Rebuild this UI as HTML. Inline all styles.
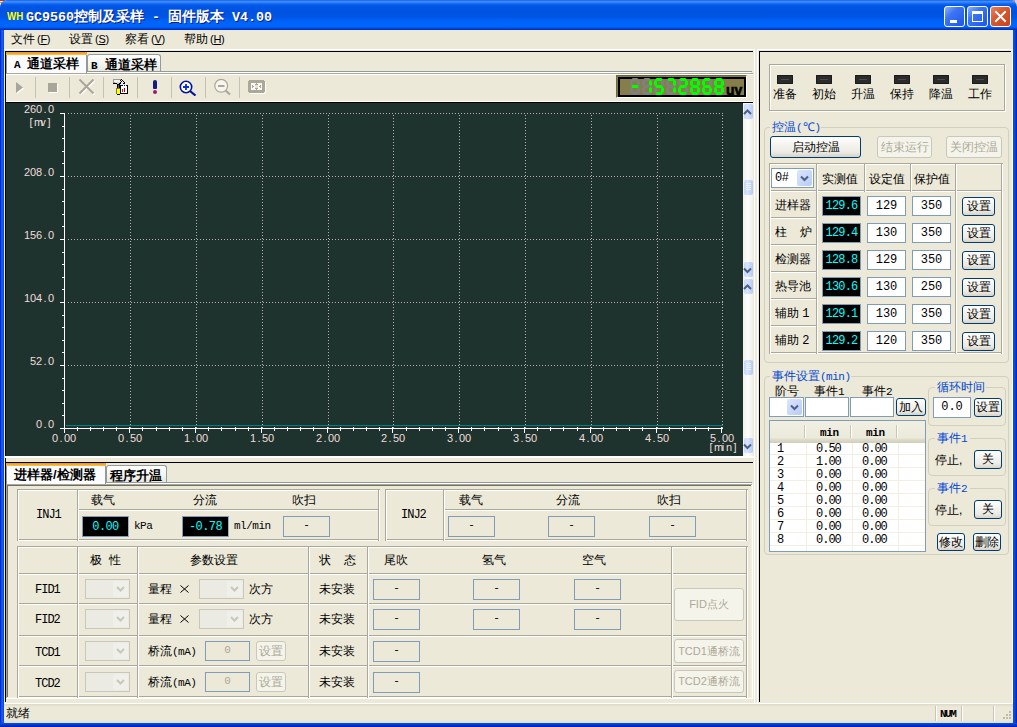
<!DOCTYPE html><html><head><meta charset="utf-8"><style>
*{margin:0;padding:0;box-sizing:border-box}
html,body{width:1017px;height:727px;overflow:hidden;background:#ECE9D8;position:relative;
 font-family:"Liberation Sans",sans-serif;font-size:12px;color:#000}
div{position:absolute}
.t{white-space:nowrap;line-height:12px}
.m{font-family:"Liberation Mono",monospace}
</style></head><body><div style="left:0;top:0;width:5px;height:1px;background:#c03810"></div>
<div style="left:0;top:1px;width:3px;height:1px;background:#f4f4f4"></div>
<div style="left:0;top:2px;width:2px;height:1px;background:#f08a30"></div>
<div style="left:0;top:3px;width:1px;height:2px;background:#fafafa"></div>
<div style="left:1011px;top:0;width:5px;height:2px;background:#c08890"></div>
<div style="left:1015px;top:0;width:2px;height:5px;background:#c8d0f4"></div>
<div style="left:0;top:0;width:1017px;height:30px;border-radius:7px 7px 0 0;background:linear-gradient(#0a50d8 0px,#3d8cff 1px,#3a8aff 2px,#0d63f2 4px,#0055e5 6px,#0053df 12px,#0055e4 17px,#0062f8 21px,#0066ff 26px,#0058ea 28px,#0032c8 29px,#0032c8 30px)"></div>
<div style="left:0;top:30px;width:4px;height:697px;background:linear-gradient(90deg,#0018c8,#0a3ee0 1px,#1a6af0 2px,#0a55e6 3px,#0842d8 4px)"></div>
<div style="left:1013px;top:30px;width:4px;height:697px;background:linear-gradient(90deg,#0842d8,#0a50e0 1px,#0038d0 3px,#0018b0 4px)"></div>
<div style="left:0;top:723px;width:1017px;height:4px;background:linear-gradient(#0a50e0,#0038d0 2px,#001ab0 4px)"></div>
<div class="t" style="left:7px;top:10px;font-weight:bold;font-size:11px;line-height:12px;color:#ffff00;transform:scaleX(0.88);transform-origin:0 0">WH</div>
<div class="t" style="left:26px;top:9px;font-weight:bold;font-size:14px;line-height:14px;color:#fff;text-shadow:1px 1px 0 #0a1f80"><span class="m" style="font-size:13.34px">GC9560</span>控制及采样<span class="m" style="font-size:13.34px"> - </span>固件版本<span class="m" style="font-size:13.34px"> V4.00</span></div>
<div style="left:944px;top:6px;width:21px;height:21px;border:1px solid #fff;border-radius:3px;background:linear-gradient(135deg,#8fb2ff 0%,#3d75f5 35%,#1d55e8 100%)"><div style="left:5px;top:13px;width:7px;height:3px;background:#fff"></div></div>
<div style="left:967px;top:6px;width:21px;height:21px;border:1px solid #fff;border-radius:3px;background:linear-gradient(135deg,#8fb2ff 0%,#3d75f5 35%,#1d55e8 100%)"><div style="left:4px;top:4px;width:11px;height:11px;border:1px solid #fff;border-top-width:3px"></div></div>
<div style="left:990px;top:6px;width:21px;height:21px;border:1px solid #fff;border-radius:3px;background:linear-gradient(135deg,#e8815f 0%,#d85a30 40%,#c8421a 100%)"><svg style="position:absolute;left:0;top:0" width="19" height="19" viewBox="0 0 19 19"><path d="M5 5 L14 14 M14 5 L5 14" stroke="#fff" stroke-width="2" stroke-linecap="square"/></svg></div>
<div class="t" style="left:11px;top:33px;font-size:12px;line-height:12px">文件<span style="margin-left:2px;font-size:11px;letter-spacing:-0.3px">(<u>F</u>)</span></div>
<div class="t" style="left:69px;top:33px;font-size:12px;line-height:12px">设置<span style="margin-left:2px;font-size:11px;letter-spacing:-0.3px">(<u>S</u>)</span></div>
<div class="t" style="left:125px;top:33px;font-size:12px;line-height:12px">察看<span style="margin-left:2px;font-size:11px;letter-spacing:-0.3px">(<u>V</u>)</span></div>
<div class="t" style="left:184px;top:33px;font-size:12px;line-height:12px">帮助<span style="margin-left:2px;font-size:11px;letter-spacing:-0.3px">(<u>H</u>)</span></div>
<div style="left:4px;top:49px;width:751px;height:1px;background:#fff"></div>
<div style="left:754px;top:49px;width:1px;height:654px;background:#fff"></div>
<div style="left:5px;top:51px;width:748px;height:1px;background:#000"></div>
<div style="left:5px;top:51px;width:1px;height:651px;background:#000"></div>
<div style="left:87px;top:71px;width:665px;height:1px;background:#919b9c"></div>
<div style="left:87px;top:72px;width:664px;height:1px;background:#fff"></div>
<div style="left:6px;top:73px;width:747px;height:1px;background:#aca899"></div>
<div style="left:6px;top:74px;width:747px;height:1px;background:#fff"></div>
<div style="left:87px;top:54px;width:74px;height:17px;border:1px solid #919b9c;border-bottom:none;border-radius:3px 3px 0 0;background:linear-gradient(#fff,#f3f3ef 60%,#e8e8e0)"></div>
<div style="left:6px;top:52px;width:81px;height:21px;background:#fcfcfe;border-left:1px solid #919b9c;border-right:1px solid #919b9c"></div>
<div style="left:6px;top:52px;width:81px;height:3px;background:linear-gradient(#e68b2c,#ffc73c);border-radius:2px 2px 0 0"></div>
<div class="t" style="left:14px;top:57px;font-weight:bold;font-size:13px;line-height:13px"><span class="m" style="font-size:11px;display:inline-block;width:13px">A</span>通道采样</div>
<div class="t" style="left:91px;top:58px;font-weight:bold;font-size:13px;line-height:13px"><span class="m" style="font-size:11px;display:inline-block;width:14px">B</span>通道采样</div>
<div style="left:35px;top:77px;width:1px;height:21px;background:#c5c2b2"></div>
<div style="left:69px;top:77px;width:1px;height:21px;background:#c5c2b2"></div>
<div style="left:103px;top:77px;width:1px;height:21px;background:#c5c2b2"></div>
<div style="left:137px;top:77px;width:1px;height:21px;background:#c5c2b2"></div>
<div style="left:171px;top:77px;width:1px;height:21px;background:#c5c2b2"></div>
<div style="left:205px;top:77px;width:1px;height:21px;background:#c5c2b2"></div>
<div style="left:239px;top:77px;width:1px;height:21px;background:#c5c2b2"></div>
<svg style="position:absolute;left:15px;top:82px" width="10" height="13"><path d="M2 1 L9 6.5 L2 12 Z" fill="#fff"/><path d="M1 0 L8 5.5 L1 11 Z" fill="#a8a599"/></svg>
<div style="left:49px;top:84px;width:9px;height:9px;background:#fff"></div>
<div style="left:48px;top:83px;width:9px;height:9px;background:#a8a599"></div>
<svg style="position:absolute;left:78px;top:78px" width="18" height="18"><path d="M2.5 2.5 L16.5 16.5 M16.5 2.5 L2.5 16.5" stroke="#fff" stroke-width="2"/><path d="M1.5 1.5 L15.5 15.5 M15.5 1.5 L1.5 15.5" stroke="#a8a599" stroke-width="2"/></svg>
<svg style="position:absolute;left:108px;top:76px" width="24" height="22" shape-rendering="crispEdges"><rect x="5" y="3" width="8" height="1" fill="#9a9a9a"/><rect x="13" y="3" width="1" height="1" fill="#000"/><rect x="5" y="4" width="1" height="3" fill="#9a9a9a"/><rect x="6" y="4" width="6" height="2" fill="#f4f4f4"/><rect x="12" y="4" width="1" height="1" fill="#000"/><rect x="14" y="4" width="1" height="1" fill="#000"/><rect x="13" y="5" width="1" height="1" fill="#000"/><rect x="15" y="5" width="1" height="1" fill="#000"/><rect x="6" y="6" width="1" height="1" fill="#9a9a9a"/><rect x="9" y="6" width="3" height="1" fill="#d8d8d8"/><rect x="12" y="6" width="1" height="1" fill="#000"/><rect x="16" y="6" width="1" height="1" fill="#000"/><rect x="5" y="7" width="4" height="1" fill="#000"/><rect x="9" y="7" width="2" height="1" fill="#c8c8c8"/><rect x="11" y="7" width="2" height="1" fill="#000"/><rect x="15" y="7" width="2" height="1" fill="#000"/><rect x="9" y="8" width="3" height="1" fill="#000"/><rect x="9" y="9" width="1" height="3" fill="#000"/><rect x="11" y="9" width="1" height="3" fill="#000"/><rect x="10" y="9" width="1" height="3" fill="#606060"/><rect x="8" y="12" width="4" height="1" fill="#808000"/><rect x="8" y="13" width="1" height="5" fill="#808000"/><rect x="9" y="13" width="3" height="5" fill="#ffff00"/><rect x="9" y="13" width="1" height="1" fill="#ffffc0"/><rect x="9" y="18" width="3" height="1" fill="#000"/><rect x="12" y="9" width="7" height="1" fill="#000080"/><rect x="15" y="9" width="1" height="1" fill="#fffff0"/><rect x="17" y="9" width="1" height="1" fill="#fffff0"/><rect x="12" y="10" width="7" height="7" fill="#fffff0"/><rect x="19" y="9" width="1" height="9" fill="#000"/><rect x="12" y="17" width="8" height="1" fill="#000"/><rect x="12" y="10" width="1" height="7" fill="#000"/><rect x="14" y="13" width="1" height="3" fill="#ff0000"/><rect x="16" y="12" width="1" height="4" fill="#800080"/></svg>
<div style="left:153px;top:80px;width:4px;height:9px;background:#1a1a80;border-radius:2px 2px 1px 1px"></div>
<div style="left:153px;top:90px;width:4px;height:4px;background:#902070;border-radius:2px"></div>
<svg style="position:absolute;left:179px;top:80px" width="18" height="16"><circle cx="7" cy="7" r="5.7" fill="#fff" stroke="#0010a0" stroke-width="1.6"/><path d="M4 7 H10 M7 4 V10" stroke="#0030e0" stroke-width="1.8"/><path d="M11 11 L16.5 15.5" stroke="#0010a0" stroke-width="2.2"/></svg>
<svg style="position:absolute;left:212px;top:78px" width="20" height="19"><circle cx="9.2" cy="7.8" r="6.4" fill="#f6f5ee" stroke="#aca899" stroke-width="1.2"/><path d="M6 8 H12.5" stroke="#aca899" stroke-width="2"/><path d="M13.5 12.5 L18 16.5" stroke="#aca899" stroke-width="2.2"/></svg>
<svg style="position:absolute;left:248px;top:80px" width="18" height="14" shape-rendering="crispEdges"><rect x="1" y="0" width="15" height="13" fill="#aca899"/><rect x="0" y="1" width="17" height="11" fill="#aca899"/><rect x="2" y="13" width="15" height="1" fill="#fff"/><rect x="17" y="2" width="1" height="11" fill="#fff"/><rect x="3" y="3" width="11" height="7" fill="#fbfbf6"/><rect x="4" y="5" width="1" height="3" fill="#aca899"/><rect x="5" y="6" width="1" height="1" fill="#aca899"/><rect x="12" y="5" width="1" height="3" fill="#aca899"/><rect x="11" y="6" width="1" height="1" fill="#aca899"/><rect x="8" y="3" width="1" height="7" fill="#aca899"/><rect x="7" y="4" width="3" height="1" fill="#aca899"/><rect x="7" y="8" width="3" height="1" fill="#aca899"/><rect x="7" y="5" width="3" height="3" fill="#e6e4d6"/></svg>
<div style="left:616px;top:75px;width:131px;height:23px;background:#847c4b;border-top:1px solid #6d683c;border-left:1px solid #6d683c;border-right:1px solid #ffffff;border-bottom:1px solid #ffffff"></div>
<div style="left:618px;top:77px;width:128px;height:20px;border:2px solid #000;background:#857d4a"></div>
<svg style="position:absolute;left:630px;top:78px" width="96" height="17"><polygon points="2.6,0 7.4,0 8.8,1.5 7.4,3 2.6,3 1.2,1.5" fill="#808080"/><polygon points="8.5,1.8 10.0,3.2 10.0,6.8 8.5,8.2 7.0,6.8 7.0,3.2" fill="#808080"/><polygon points="8.5,8.8 10.0,10.2 10.0,13.8 8.5,15.2 7.0,13.8 7.0,10.2" fill="#808080"/><polygon points="2.6,14 7.4,14 8.8,15.5 7.4,17 2.6,17 1.2,15.5" fill="#808080"/><polygon points="1.5,8.8 3.0,10.2 3.0,13.8 1.5,15.2 0.0,13.8 0.0,10.2" fill="#808080"/><polygon points="1.5,1.8 3.0,3.2 3.0,6.8 1.5,8.2 0.0,6.8 0.0,3.2" fill="#808080"/><polygon points="2.6,7 7.4,7 8.8,8.5 7.4,10 2.6,10 1.2,8.5" fill="#00ff00"/><polygon points="14.6,0 19.4,0 20.8,1.5 19.4,3 14.6,3 13.2,1.5" fill="#808080"/><polygon points="20.5,1.8 22.0,3.2 22.0,6.8 20.5,8.2 19.0,6.8 19.0,3.2" fill="#00ff00"/><polygon points="20.5,8.8 22.0,10.2 22.0,13.8 20.5,15.2 19.0,13.8 19.0,10.2" fill="#00ff00"/><polygon points="14.6,14 19.4,14 20.8,15.5 19.4,17 14.6,17 13.2,15.5" fill="#808080"/><polygon points="13.5,8.8 15.0,10.2 15.0,13.8 13.5,15.2 12.0,13.8 12.0,10.2" fill="#808080"/><polygon points="13.5,1.8 15.0,3.2 15.0,6.8 13.5,8.2 12.0,6.8 12.0,3.2" fill="#808080"/><polygon points="14.6,7 19.4,7 20.8,8.5 19.4,10 14.6,10 13.2,8.5" fill="#808080"/><polygon points="26.6,0 31.4,0 32.8,1.5 31.4,3 26.6,3 25.2,1.5" fill="#00ff00"/><polygon points="32.5,1.8 34.0,3.2 34.0,6.8 32.5,8.2 31.0,6.8 31.0,3.2" fill="#808080"/><polygon points="32.5,8.8 34.0,10.2 34.0,13.8 32.5,15.2 31.0,13.8 31.0,10.2" fill="#00ff00"/><polygon points="26.6,14 31.4,14 32.8,15.5 31.4,17 26.6,17 25.2,15.5" fill="#00ff00"/><polygon points="25.5,8.8 27.0,10.2 27.0,13.8 25.5,15.2 24.0,13.8 24.0,10.2" fill="#808080"/><polygon points="25.5,1.8 27.0,3.2 27.0,6.8 25.5,8.2 24.0,6.8 24.0,3.2" fill="#00ff00"/><polygon points="26.6,7 31.4,7 32.8,8.5 31.4,10 26.6,10 25.2,8.5" fill="#00ff00"/><polygon points="38.6,0 43.4,0 44.8,1.5 43.4,3 38.6,3 37.2,1.5" fill="#00ff00"/><polygon points="44.5,1.8 46.0,3.2 46.0,6.8 44.5,8.2 43.0,6.8 43.0,3.2" fill="#00ff00"/><polygon points="44.5,8.8 46.0,10.2 46.0,13.8 44.5,15.2 43.0,13.8 43.0,10.2" fill="#00ff00"/><polygon points="38.6,14 43.4,14 44.8,15.5 43.4,17 38.6,17 37.2,15.5" fill="#808080"/><polygon points="37.5,8.8 39.0,10.2 39.0,13.8 37.5,15.2 36.0,13.8 36.0,10.2" fill="#808080"/><polygon points="37.5,1.8 39.0,3.2 39.0,6.8 37.5,8.2 36.0,6.8 36.0,3.2" fill="#808080"/><polygon points="38.6,7 43.4,7 44.8,8.5 43.4,10 38.6,10 37.2,8.5" fill="#808080"/><polygon points="50.6,0 55.4,0 56.8,1.5 55.4,3 50.6,3 49.2,1.5" fill="#00ff00"/><polygon points="56.5,1.8 58.0,3.2 58.0,6.8 56.5,8.2 55.0,6.8 55.0,3.2" fill="#00ff00"/><polygon points="56.5,8.8 58.0,10.2 58.0,13.8 56.5,15.2 55.0,13.8 55.0,10.2" fill="#808080"/><polygon points="50.6,14 55.4,14 56.8,15.5 55.4,17 50.6,17 49.2,15.5" fill="#00ff00"/><polygon points="49.5,8.8 51.0,10.2 51.0,13.8 49.5,15.2 48.0,13.8 48.0,10.2" fill="#00ff00"/><polygon points="49.5,1.8 51.0,3.2 51.0,6.8 49.5,8.2 48.0,6.8 48.0,3.2" fill="#808080"/><polygon points="50.6,7 55.4,7 56.8,8.5 55.4,10 50.6,10 49.2,8.5" fill="#00ff00"/><polygon points="62.6,0 67.4,0 68.8,1.5 67.4,3 62.6,3 61.2,1.5" fill="#00ff00"/><polygon points="68.5,1.8 70.0,3.2 70.0,6.8 68.5,8.2 67.0,6.8 67.0,3.2" fill="#00ff00"/><polygon points="68.5,8.8 70.0,10.2 70.0,13.8 68.5,15.2 67.0,13.8 67.0,10.2" fill="#00ff00"/><polygon points="62.6,14 67.4,14 68.8,15.5 67.4,17 62.6,17 61.2,15.5" fill="#00ff00"/><polygon points="61.5,8.8 63.0,10.2 63.0,13.8 61.5,15.2 60.0,13.8 60.0,10.2" fill="#00ff00"/><polygon points="61.5,1.8 63.0,3.2 63.0,6.8 61.5,8.2 60.0,6.8 60.0,3.2" fill="#00ff00"/><polygon points="62.6,7 67.4,7 68.8,8.5 67.4,10 62.6,10 61.2,8.5" fill="#00ff00"/><polygon points="74.6,0 79.4,0 80.8,1.5 79.4,3 74.6,3 73.2,1.5" fill="#00ff00"/><polygon points="80.5,1.8 82.0,3.2 82.0,6.8 80.5,8.2 79.0,6.8 79.0,3.2" fill="#808080"/><polygon points="80.5,8.8 82.0,10.2 82.0,13.8 80.5,15.2 79.0,13.8 79.0,10.2" fill="#00ff00"/><polygon points="74.6,14 79.4,14 80.8,15.5 79.4,17 74.6,17 73.2,15.5" fill="#00ff00"/><polygon points="73.5,8.8 75.0,10.2 75.0,13.8 73.5,15.2 72.0,13.8 72.0,10.2" fill="#00ff00"/><polygon points="73.5,1.8 75.0,3.2 75.0,6.8 73.5,8.2 72.0,6.8 72.0,3.2" fill="#00ff00"/><polygon points="74.6,7 79.4,7 80.8,8.5 79.4,10 74.6,10 73.2,8.5" fill="#00ff00"/><polygon points="86.6,0 91.4,0 92.8,1.5 91.4,3 86.6,3 85.2,1.5" fill="#00ff00"/><polygon points="92.5,1.8 94.0,3.2 94.0,6.8 92.5,8.2 91.0,6.8 91.0,3.2" fill="#00ff00"/><polygon points="92.5,8.8 94.0,10.2 94.0,13.8 92.5,15.2 91.0,13.8 91.0,10.2" fill="#00ff00"/><polygon points="86.6,14 91.4,14 92.8,15.5 91.4,17 86.6,17 85.2,15.5" fill="#00ff00"/><polygon points="85.5,8.8 87.0,10.2 87.0,13.8 85.5,15.2 84.0,13.8 84.0,10.2" fill="#00ff00"/><polygon points="85.5,1.8 87.0,3.2 87.0,6.8 85.5,8.2 84.0,6.8 84.0,3.2" fill="#00ff00"/><polygon points="86.6,7 91.4,7 92.8,8.5 91.4,10 86.6,10 85.2,8.5" fill="#00ff00"/></svg>
<div class="t" style="left:726px;top:83px;font-weight:bold;font-size:14px;line-height:14px;letter-spacing:0px;-webkit-text-stroke:0.6px #000">uv</div>
<div style="left:6px;top:101px;width:747px;height:1px;background:#fff"></div>
<div style="left:5px;top:102px;width:748px;height:1px;background:#000"></div>
<div style="left:6px;top:103px;width:737px;height:353px;background:#1f332e"></div>
<div style="left:5px;top:456px;width:749px;height:2px;background:#fff"></div>
<div style="left:66px;top:113px;width:657px;height:1px;background:repeating-linear-gradient(90deg,#b4b4ac 0 1px,transparent 1px 3px);background-position:2px 0"></div>
<div style="left:66px;top:176px;width:657px;height:1px;background:repeating-linear-gradient(90deg,#b4b4ac 0 1px,transparent 1px 3px);background-position:2px 0"></div>
<div style="left:66px;top:239px;width:657px;height:1px;background:repeating-linear-gradient(90deg,#b4b4ac 0 1px,transparent 1px 3px);background-position:2px 0"></div>
<div style="left:66px;top:302px;width:657px;height:1px;background:repeating-linear-gradient(90deg,#b4b4ac 0 1px,transparent 1px 3px);background-position:2px 0"></div>
<div style="left:66px;top:365px;width:657px;height:1px;background:repeating-linear-gradient(90deg,#b4b4ac 0 1px,transparent 1px 3px);background-position:2px 0"></div>
<div style="left:130px;top:115px;width:1px;height:313px;background:repeating-linear-gradient(180deg,#b4b4ac 0 1px,transparent 1px 3px)"></div>
<div style="left:196px;top:115px;width:1px;height:313px;background:repeating-linear-gradient(180deg,#b4b4ac 0 1px,transparent 1px 3px)"></div>
<div style="left:262px;top:115px;width:1px;height:313px;background:repeating-linear-gradient(180deg,#b4b4ac 0 1px,transparent 1px 3px)"></div>
<div style="left:328px;top:115px;width:1px;height:313px;background:repeating-linear-gradient(180deg,#b4b4ac 0 1px,transparent 1px 3px)"></div>
<div style="left:393px;top:115px;width:1px;height:313px;background:repeating-linear-gradient(180deg,#b4b4ac 0 1px,transparent 1px 3px)"></div>
<div style="left:459px;top:115px;width:1px;height:313px;background:repeating-linear-gradient(180deg,#b4b4ac 0 1px,transparent 1px 3px)"></div>
<div style="left:525px;top:115px;width:1px;height:313px;background:repeating-linear-gradient(180deg,#b4b4ac 0 1px,transparent 1px 3px)"></div>
<div style="left:591px;top:115px;width:1px;height:313px;background:repeating-linear-gradient(180deg,#b4b4ac 0 1px,transparent 1px 3px)"></div>
<div style="left:657px;top:115px;width:1px;height:313px;background:repeating-linear-gradient(180deg,#b4b4ac 0 1px,transparent 1px 3px)"></div>
<div style="left:722px;top:115px;width:1px;height:313px;background:repeating-linear-gradient(180deg,#b4b4ac 0 1px,transparent 1px 3px)"></div>
<div style="left:64px;top:113px;width:1px;height:320px;background:#fff"></div>
<div style="left:60px;top:113px;width:5px;height:1px;background:#fff"></div>
<div style="left:62px;top:126px;width:3px;height:1px;background:#fff"></div>
<div style="left:62px;top:138px;width:3px;height:1px;background:#fff"></div>
<div style="left:62px;top:151px;width:3px;height:1px;background:#fff"></div>
<div style="left:62px;top:163px;width:3px;height:1px;background:#fff"></div>
<div style="left:60px;top:176px;width:5px;height:1px;background:#fff"></div>
<div style="left:62px;top:189px;width:3px;height:1px;background:#fff"></div>
<div style="left:62px;top:201px;width:3px;height:1px;background:#fff"></div>
<div style="left:62px;top:214px;width:3px;height:1px;background:#fff"></div>
<div style="left:62px;top:226px;width:3px;height:1px;background:#fff"></div>
<div style="left:60px;top:239px;width:5px;height:1px;background:#fff"></div>
<div style="left:62px;top:252px;width:3px;height:1px;background:#fff"></div>
<div style="left:62px;top:264px;width:3px;height:1px;background:#fff"></div>
<div style="left:62px;top:277px;width:3px;height:1px;background:#fff"></div>
<div style="left:62px;top:289px;width:3px;height:1px;background:#fff"></div>
<div style="left:60px;top:302px;width:5px;height:1px;background:#fff"></div>
<div style="left:62px;top:315px;width:3px;height:1px;background:#fff"></div>
<div style="left:62px;top:327px;width:3px;height:1px;background:#fff"></div>
<div style="left:62px;top:340px;width:3px;height:1px;background:#fff"></div>
<div style="left:62px;top:352px;width:3px;height:1px;background:#fff"></div>
<div style="left:60px;top:365px;width:5px;height:1px;background:#fff"></div>
<div style="left:62px;top:378px;width:3px;height:1px;background:#fff"></div>
<div style="left:62px;top:390px;width:3px;height:1px;background:#fff"></div>
<div style="left:62px;top:403px;width:3px;height:1px;background:#fff"></div>
<div style="left:62px;top:415px;width:3px;height:1px;background:#fff"></div>
<div style="left:60px;top:428px;width:5px;height:1px;background:#fff"></div>
<div style="left:64px;top:428px;width:659px;height:1px;background:#fff"></div>
<div style="left:77px;top:427px;width:1px;height:4px;background:#fff"></div>
<div style="left:90px;top:427px;width:1px;height:4px;background:#fff"></div>
<div style="left:103px;top:427px;width:1px;height:4px;background:#fff"></div>
<div style="left:116px;top:427px;width:1px;height:4px;background:#fff"></div>
<div style="left:129px;top:427px;width:1px;height:6px;background:#fff"></div>
<div style="left:142px;top:427px;width:1px;height:4px;background:#fff"></div>
<div style="left:156px;top:427px;width:1px;height:4px;background:#fff"></div>
<div style="left:169px;top:427px;width:1px;height:4px;background:#fff"></div>
<div style="left:182px;top:427px;width:1px;height:4px;background:#fff"></div>
<div style="left:195px;top:427px;width:1px;height:6px;background:#fff"></div>
<div style="left:208px;top:427px;width:1px;height:4px;background:#fff"></div>
<div style="left:221px;top:427px;width:1px;height:4px;background:#fff"></div>
<div style="left:235px;top:427px;width:1px;height:4px;background:#fff"></div>
<div style="left:248px;top:427px;width:1px;height:4px;background:#fff"></div>
<div style="left:261px;top:427px;width:1px;height:6px;background:#fff"></div>
<div style="left:274px;top:427px;width:1px;height:4px;background:#fff"></div>
<div style="left:287px;top:427px;width:1px;height:4px;background:#fff"></div>
<div style="left:300px;top:427px;width:1px;height:4px;background:#fff"></div>
<div style="left:313px;top:427px;width:1px;height:4px;background:#fff"></div>
<div style="left:327px;top:427px;width:1px;height:6px;background:#fff"></div>
<div style="left:340px;top:427px;width:1px;height:4px;background:#fff"></div>
<div style="left:353px;top:427px;width:1px;height:4px;background:#fff"></div>
<div style="left:366px;top:427px;width:1px;height:4px;background:#fff"></div>
<div style="left:379px;top:427px;width:1px;height:4px;background:#fff"></div>
<div style="left:392px;top:427px;width:1px;height:6px;background:#fff"></div>
<div style="left:406px;top:427px;width:1px;height:4px;background:#fff"></div>
<div style="left:419px;top:427px;width:1px;height:4px;background:#fff"></div>
<div style="left:432px;top:427px;width:1px;height:4px;background:#fff"></div>
<div style="left:445px;top:427px;width:1px;height:4px;background:#fff"></div>
<div style="left:458px;top:427px;width:1px;height:6px;background:#fff"></div>
<div style="left:471px;top:427px;width:1px;height:4px;background:#fff"></div>
<div style="left:484px;top:427px;width:1px;height:4px;background:#fff"></div>
<div style="left:498px;top:427px;width:1px;height:4px;background:#fff"></div>
<div style="left:511px;top:427px;width:1px;height:4px;background:#fff"></div>
<div style="left:524px;top:427px;width:1px;height:6px;background:#fff"></div>
<div style="left:537px;top:427px;width:1px;height:4px;background:#fff"></div>
<div style="left:550px;top:427px;width:1px;height:4px;background:#fff"></div>
<div style="left:563px;top:427px;width:1px;height:4px;background:#fff"></div>
<div style="left:577px;top:427px;width:1px;height:4px;background:#fff"></div>
<div style="left:590px;top:427px;width:1px;height:6px;background:#fff"></div>
<div style="left:603px;top:427px;width:1px;height:4px;background:#fff"></div>
<div style="left:616px;top:427px;width:1px;height:4px;background:#fff"></div>
<div style="left:629px;top:427px;width:1px;height:4px;background:#fff"></div>
<div style="left:642px;top:427px;width:1px;height:4px;background:#fff"></div>
<div style="left:656px;top:427px;width:1px;height:6px;background:#fff"></div>
<div style="left:669px;top:427px;width:1px;height:4px;background:#fff"></div>
<div style="left:682px;top:427px;width:1px;height:4px;background:#fff"></div>
<div style="left:695px;top:427px;width:1px;height:4px;background:#fff"></div>
<div style="left:708px;top:427px;width:1px;height:4px;background:#fff"></div>
<div style="left:721px;top:427px;width:1px;height:6px;background:#fff"></div>
<div style="left:66px;top:425px;width:657px;height:1px;background:#008080"></div>
<div class="t" style="left:24px;top:103px;width:30px;font-size:11px;line-height:12px;color:#f0dcdc"><span style="display:inline-block;width:6px;text-align:center">2</span><span style="display:inline-block;width:6px;text-align:center">6</span><span style="display:inline-block;width:6px;text-align:center">0</span><span style="display:inline-block;width:6px;text-align:center">.</span><span style="display:inline-block;width:6px;text-align:center">0</span></div>
<div class="t" style="left:24px;top:166px;width:30px;font-size:11px;line-height:12px;color:#f0dcdc"><span style="display:inline-block;width:6px;text-align:center">2</span><span style="display:inline-block;width:6px;text-align:center">0</span><span style="display:inline-block;width:6px;text-align:center">8</span><span style="display:inline-block;width:6px;text-align:center">.</span><span style="display:inline-block;width:6px;text-align:center">0</span></div>
<div class="t" style="left:24px;top:229px;width:30px;font-size:11px;line-height:12px;color:#f0dcdc"><span style="display:inline-block;width:6px;text-align:center">1</span><span style="display:inline-block;width:6px;text-align:center">5</span><span style="display:inline-block;width:6px;text-align:center">6</span><span style="display:inline-block;width:6px;text-align:center">.</span><span style="display:inline-block;width:6px;text-align:center">0</span></div>
<div class="t" style="left:24px;top:292px;width:30px;font-size:11px;line-height:12px;color:#f0dcdc"><span style="display:inline-block;width:6px;text-align:center">1</span><span style="display:inline-block;width:6px;text-align:center">0</span><span style="display:inline-block;width:6px;text-align:center">4</span><span style="display:inline-block;width:6px;text-align:center">.</span><span style="display:inline-block;width:6px;text-align:center">0</span></div>
<div class="t" style="left:30px;top:355px;width:24px;font-size:11px;line-height:12px;color:#f0dcdc"><span style="display:inline-block;width:6px;text-align:center">5</span><span style="display:inline-block;width:6px;text-align:center">2</span><span style="display:inline-block;width:6px;text-align:center">.</span><span style="display:inline-block;width:6px;text-align:center">0</span></div>
<div class="t" style="left:36px;top:418px;width:18px;font-size:11px;line-height:12px;color:#f0dcdc"><span style="display:inline-block;width:6px;text-align:center">0</span><span style="display:inline-block;width:6px;text-align:center">.</span><span style="display:inline-block;width:6px;text-align:center">0</span></div>
<div class="t" style="left:28px;top:116px;font-size:11px;line-height:12px;color:#f0dcdc"><span style="display:inline-block;width:6px;text-align:center">[</span><span style="display:inline-block;width:6px;text-align:center">m</span><span style="display:inline-block;width:6px;text-align:center">v</span><span style="display:inline-block;width:6px;text-align:center">]</span></div>
<div class="t" style="left:52px;top:432px;font-size:11px;line-height:12px;color:#f0dcdc"><span style="display:inline-block;width:6px;text-align:center">0</span><span style="display:inline-block;width:6px;text-align:center">.</span><span style="display:inline-block;width:6px;text-align:center">0</span><span style="display:inline-block;width:6px;text-align:center">0</span></div>
<div class="t" style="left:118px;top:432px;font-size:11px;line-height:12px;color:#f0dcdc"><span style="display:inline-block;width:6px;text-align:center">0</span><span style="display:inline-block;width:6px;text-align:center">.</span><span style="display:inline-block;width:6px;text-align:center">5</span><span style="display:inline-block;width:6px;text-align:center">0</span></div>
<div class="t" style="left:184px;top:432px;font-size:11px;line-height:12px;color:#f0dcdc"><span style="display:inline-block;width:6px;text-align:center">1</span><span style="display:inline-block;width:6px;text-align:center">.</span><span style="display:inline-block;width:6px;text-align:center">0</span><span style="display:inline-block;width:6px;text-align:center">0</span></div>
<div class="t" style="left:250px;top:432px;font-size:11px;line-height:12px;color:#f0dcdc"><span style="display:inline-block;width:6px;text-align:center">1</span><span style="display:inline-block;width:6px;text-align:center">.</span><span style="display:inline-block;width:6px;text-align:center">5</span><span style="display:inline-block;width:6px;text-align:center">0</span></div>
<div class="t" style="left:316px;top:432px;font-size:11px;line-height:12px;color:#f0dcdc"><span style="display:inline-block;width:6px;text-align:center">2</span><span style="display:inline-block;width:6px;text-align:center">.</span><span style="display:inline-block;width:6px;text-align:center">0</span><span style="display:inline-block;width:6px;text-align:center">0</span></div>
<div class="t" style="left:381px;top:432px;font-size:11px;line-height:12px;color:#f0dcdc"><span style="display:inline-block;width:6px;text-align:center">2</span><span style="display:inline-block;width:6px;text-align:center">.</span><span style="display:inline-block;width:6px;text-align:center">5</span><span style="display:inline-block;width:6px;text-align:center">0</span></div>
<div class="t" style="left:447px;top:432px;font-size:11px;line-height:12px;color:#f0dcdc"><span style="display:inline-block;width:6px;text-align:center">3</span><span style="display:inline-block;width:6px;text-align:center">.</span><span style="display:inline-block;width:6px;text-align:center">0</span><span style="display:inline-block;width:6px;text-align:center">0</span></div>
<div class="t" style="left:513px;top:432px;font-size:11px;line-height:12px;color:#f0dcdc"><span style="display:inline-block;width:6px;text-align:center">3</span><span style="display:inline-block;width:6px;text-align:center">.</span><span style="display:inline-block;width:6px;text-align:center">5</span><span style="display:inline-block;width:6px;text-align:center">0</span></div>
<div class="t" style="left:579px;top:432px;font-size:11px;line-height:12px;color:#f0dcdc"><span style="display:inline-block;width:6px;text-align:center">4</span><span style="display:inline-block;width:6px;text-align:center">.</span><span style="display:inline-block;width:6px;text-align:center">0</span><span style="display:inline-block;width:6px;text-align:center">0</span></div>
<div class="t" style="left:645px;top:432px;font-size:11px;line-height:12px;color:#f0dcdc"><span style="display:inline-block;width:6px;text-align:center">4</span><span style="display:inline-block;width:6px;text-align:center">.</span><span style="display:inline-block;width:6px;text-align:center">5</span><span style="display:inline-block;width:6px;text-align:center">0</span></div>
<div class="t" style="left:710px;top:432px;font-size:11px;line-height:12px;color:#f0dcdc"><span style="display:inline-block;width:6px;text-align:center">5</span><span style="display:inline-block;width:6px;text-align:center">.</span><span style="display:inline-block;width:6px;text-align:center">0</span><span style="display:inline-block;width:6px;text-align:center">0</span></div>
<div class="t" style="left:708px;top:441px;font-size:11px;line-height:12px;color:#f0dcdc"><span style="display:inline-block;width:6px;text-align:center">[</span><span style="display:inline-block;width:6px;text-align:center">m</span><span style="display:inline-block;width:6px;text-align:center">i</span><span style="display:inline-block;width:6px;text-align:center">n</span><span style="display:inline-block;width:6px;text-align:center">]</span></div>
<div style="left:743px;top:103px;width:10px;height:175px;background:linear-gradient(90deg,#f3f1ec,#fefefe 50%,#f0eee8)"></div>
<div style="left:744px;top:104px;width:9px;height:15px;border-radius:2px;background:linear-gradient(90deg,#c6d6fc,#d8e4fe 40%,#b4c8f6)"></div>
<svg style="position:absolute;left:743px;top:108px" width="10" height="9"><path d="M1 6 L4.5 2.5 L8 6" stroke="#4d6185" stroke-width="2" fill="none"/></svg>
<div style="left:744px;top:262px;width:9px;height:15px;border-radius:2px;background:linear-gradient(90deg,#c6d6fc,#d8e4fe 40%,#b4c8f6)"></div>
<svg style="position:absolute;left:743px;top:266px" width="10" height="9"><path d="M1 2.5 L4.5 6 L8 2.5" stroke="#4d6185" stroke-width="2" fill="none"/></svg>
<div style="left:744px;top:180px;width:9px;height:15px;border-radius:2px;background:linear-gradient(90deg,#c6d6fc,#d8e4fe 40%,#b4c8f6)"></div>
<div style="left:746px;top:183px;width:5px;height:1px;background:#eef3fe"></div>
<div style="left:746px;top:185px;width:5px;height:1px;background:#eef3fe"></div>
<div style="left:746px;top:187px;width:5px;height:1px;background:#eef3fe"></div>
<div style="left:746px;top:189px;width:5px;height:1px;background:#eef3fe"></div>
<div style="left:743px;top:278px;width:10px;height:178px;background:linear-gradient(90deg,#f3f1ec,#fefefe 50%,#f0eee8)"></div>
<div style="left:744px;top:279px;width:9px;height:15px;border-radius:2px;background:linear-gradient(90deg,#c6d6fc,#d8e4fe 40%,#b4c8f6)"></div>
<svg style="position:absolute;left:743px;top:283px" width="10" height="9"><path d="M1 6 L4.5 2.5 L8 6" stroke="#4d6185" stroke-width="2" fill="none"/></svg>
<div style="left:744px;top:438px;width:9px;height:15px;border-radius:2px;background:linear-gradient(90deg,#c6d6fc,#d8e4fe 40%,#b4c8f6)"></div>
<svg style="position:absolute;left:743px;top:442px" width="10" height="9"><path d="M1 2.5 L4.5 6 L8 2.5" stroke="#4d6185" stroke-width="2" fill="none"/></svg>
<div style="left:744px;top:360px;width:9px;height:15px;border-radius:2px;background:linear-gradient(90deg,#c6d6fc,#d8e4fe 40%,#b4c8f6)"></div>
<div style="left:746px;top:363px;width:5px;height:1px;background:#eef3fe"></div>
<div style="left:746px;top:365px;width:5px;height:1px;background:#eef3fe"></div>
<div style="left:746px;top:367px;width:5px;height:1px;background:#eef3fe"></div>
<div style="left:746px;top:369px;width:5px;height:1px;background:#eef3fe"></div>
<div style="left:5px;top:462px;width:748px;height:1px;background:#000"></div>
<div style="left:106px;top:482px;width:646px;height:1px;background:#919b9c"></div>
<div style="left:106px;top:483px;width:645px;height:1px;background:#fff"></div>
<div style="left:6px;top:484px;width:746px;height:1px;background:#aca899"></div>
<div style="left:7px;top:485px;width:744px;height:1px;background:#716f64"></div>
<div style="left:6px;top:484px;width:1px;height:214px;background:#aca899"></div>
<div style="left:7px;top:485px;width:1px;height:212px;background:#716f64"></div>
<div style="left:751px;top:485px;width:1px;height:213px;background:#f1efe2"></div>
<div style="left:7px;top:697px;width:745px;height:1px;background:#f1efe2"></div>
<div style="left:6px;top:698px;width:747px;height:1px;background:#fff"></div>
<div style="left:752px;top:484px;width:1px;height:215px;background:#fff"></div>
<div style="left:106px;top:465px;width:61px;height:17px;border:1px solid #919b9c;border-bottom:none;border-radius:3px 3px 0 0;background:linear-gradient(#fff,#f3f3ef 60%,#e8e8e0)"></div>
<div style="left:6px;top:463px;width:100px;height:21px;background:#fcfcfe;border-left:1px solid #919b9c;border-right:1px solid #919b9c"></div>
<div style="left:6px;top:463px;width:100px;height:3px;background:linear-gradient(#e68b2c,#ffc73c);border-radius:2px 2px 0 0"></div>
<div class="t" style="left:14px;top:468px;font-weight:bold;font-size:13px;line-height:13px">进样器/检测器</div>
<div class="t" style="left:110px;top:469px;font-weight:bold;font-size:13px;line-height:13px">程序升温</div>
<div style="left:17px;top:489px;width:363px;height:1px;background:#aca899"></div>
<div style="left:18px;top:490px;width:362px;height:1px;background:#fff"></div>
<div style="left:77px;top:509px;width:303px;height:1px;background:#aca899"></div>
<div style="left:78px;top:510px;width:302px;height:1px;background:#fff"></div>
<div style="left:17px;top:539px;width:363px;height:1px;background:#aca899"></div>
<div style="left:18px;top:540px;width:362px;height:1px;background:#fff"></div>
<div style="left:17px;top:489px;width:1px;height:52px;background:#aca899"></div>
<div style="left:18px;top:490px;width:1px;height:51px;background:#fff"></div>
<div style="left:77px;top:489px;width:1px;height:52px;background:#aca899"></div>
<div style="left:78px;top:490px;width:1px;height:51px;background:#fff"></div>
<div style="left:378px;top:489px;width:1px;height:52px;background:#aca899"></div>
<div style="left:379px;top:490px;width:1px;height:51px;background:#fff"></div>
<div class="t m" style="left:36px;top:509px;font-size:12px;line-height:12px;letter-spacing:-1px">INJ1</div>
<div class="t" style="left:91px;top:494px;font-size:12px;line-height:12px;">载气</div>
<div class="t" style="left:193px;top:494px;font-size:12px;line-height:12px;">分流</div>
<div class="t" style="left:292px;top:494px;font-size:12px;line-height:12px;">吹扫</div>
<div class="t m" style="left:82px;top:516px;width:47px;height:21px;background:#000;border:1px solid #7f9db9;border-right-color:#9db0c9;color:#00ffff;font-size:12px;line-height:21px;text-align:center;letter-spacing:-0.6px">0.00</div>
<div class="t m" style="left:134px;top:520px;font-size:11px;line-height:12px;letter-spacing:-0.5px">kPa</div>
<div class="t m" style="left:182px;top:516px;width:47px;height:21px;background:#000;border:1px solid #7f9db9;border-right-color:#9db0c9;color:#00ffff;font-size:12px;line-height:21px;text-align:center;letter-spacing:-0.6px">-0.78</div>
<div class="t m" style="left:234px;top:520px;font-size:11px;line-height:12px;letter-spacing:-0.5px">ml/min</div>
<div class="t m" style="left:283px;top:516px;width:47px;height:21px;border:1px solid #7f9db9;color:#000;font-size:11px;line-height:17px;text-align:center">-</div>
<div style="left:385px;top:489px;width:363px;height:1px;background:#aca899"></div>
<div style="left:386px;top:490px;width:362px;height:1px;background:#fff"></div>
<div style="left:443px;top:509px;width:305px;height:1px;background:#aca899"></div>
<div style="left:444px;top:510px;width:304px;height:1px;background:#fff"></div>
<div style="left:385px;top:539px;width:363px;height:1px;background:#aca899"></div>
<div style="left:386px;top:540px;width:362px;height:1px;background:#fff"></div>
<div style="left:385px;top:489px;width:1px;height:52px;background:#aca899"></div>
<div style="left:386px;top:490px;width:1px;height:51px;background:#fff"></div>
<div style="left:443px;top:489px;width:1px;height:52px;background:#aca899"></div>
<div style="left:444px;top:490px;width:1px;height:51px;background:#fff"></div>
<div style="left:746px;top:489px;width:1px;height:52px;background:#aca899"></div>
<div style="left:747px;top:490px;width:1px;height:51px;background:#fff"></div>
<div class="t m" style="left:401px;top:509px;font-size:12px;line-height:12px;letter-spacing:-1px">INJ2</div>
<div class="t" style="left:459px;top:494px;font-size:12px;line-height:12px;">载气</div>
<div class="t" style="left:556px;top:494px;font-size:12px;line-height:12px;">分流</div>
<div class="t" style="left:657px;top:494px;font-size:12px;line-height:12px;">吹扫</div>
<div class="t m" style="left:448px;top:516px;width:47px;height:21px;border:1px solid #7f9db9;color:#000;font-size:11px;line-height:17px;text-align:center">-</div>
<div class="t m" style="left:548px;top:516px;width:47px;height:21px;border:1px solid #7f9db9;color:#000;font-size:11px;line-height:17px;text-align:center">-</div>
<div class="t m" style="left:649px;top:516px;width:47px;height:21px;border:1px solid #7f9db9;color:#000;font-size:11px;line-height:17px;text-align:center">-</div>
<div style="left:17px;top:546px;width:731px;height:1px;background:#aca899"></div>
<div style="left:18px;top:547px;width:730px;height:1px;background:#fff"></div>
<div style="left:17px;top:573px;width:731px;height:1px;background:#aca899"></div>
<div style="left:18px;top:574px;width:730px;height:1px;background:#fff"></div>
<div style="left:17px;top:603px;width:656px;height:1px;background:#aca899"></div>
<div style="left:18px;top:604px;width:655px;height:1px;background:#fff"></div>
<div style="left:17px;top:635px;width:731px;height:1px;background:#aca899"></div>
<div style="left:18px;top:636px;width:730px;height:1px;background:#fff"></div>
<div style="left:17px;top:665px;width:731px;height:1px;background:#aca899"></div>
<div style="left:18px;top:666px;width:730px;height:1px;background:#fff"></div>
<div style="left:17px;top:696px;width:731px;height:1px;background:#aca899"></div>
<div style="left:18px;top:697px;width:730px;height:1px;background:#fff"></div>
<div style="left:17px;top:546px;width:1px;height:152px;background:#aca899"></div>
<div style="left:18px;top:547px;width:1px;height:151px;background:#fff"></div>
<div style="left:77px;top:546px;width:1px;height:152px;background:#aca899"></div>
<div style="left:78px;top:547px;width:1px;height:151px;background:#fff"></div>
<div style="left:137px;top:546px;width:1px;height:152px;background:#aca899"></div>
<div style="left:138px;top:547px;width:1px;height:151px;background:#fff"></div>
<div style="left:308px;top:546px;width:1px;height:152px;background:#aca899"></div>
<div style="left:309px;top:547px;width:1px;height:151px;background:#fff"></div>
<div style="left:367px;top:546px;width:1px;height:152px;background:#aca899"></div>
<div style="left:368px;top:547px;width:1px;height:151px;background:#fff"></div>
<div style="left:671px;top:546px;width:1px;height:152px;background:#aca899"></div>
<div style="left:672px;top:547px;width:1px;height:151px;background:#fff"></div>
<div style="left:746px;top:546px;width:1px;height:152px;background:#aca899"></div>
<div style="left:747px;top:547px;width:1px;height:151px;background:#fff"></div>
<div class="t" style="left:90px;top:554px;font-size:12px;line-height:12px;">极&nbsp;&nbsp;性</div>
<div class="t" style="left:190px;top:554px;font-size:12px;line-height:12px;">参数设置</div>
<div class="t" style="left:319px;top:554px;font-size:12px;line-height:12px;">状&nbsp;&nbsp;&nbsp;&nbsp;态</div>
<div class="t" style="left:384px;top:554px;font-size:12px;line-height:12px;">尾吹</div>
<div class="t" style="left:482px;top:554px;font-size:12px;line-height:12px;">氢气</div>
<div class="t" style="left:582px;top:554px;font-size:12px;line-height:12px;">空气</div>
<div class="t m" style="left:35px;top:584px;font-size:12px;line-height:12px;letter-spacing:-1px">FID1</div>
<div class="t m" style="left:35px;top:614px;font-size:12px;line-height:12px;letter-spacing:-1px">FID2</div>
<div class="t m" style="left:35px;top:647px;font-size:12px;line-height:12px;letter-spacing:-1px">TCD1</div>
<div class="t m" style="left:35px;top:678px;font-size:12px;line-height:12px;letter-spacing:-1px">TCD2</div>
<div style="left:85px;top:579px;width:45px;height:20px;border:1px solid #c9c7ba;background:#ebebe4"></div>
<div style="left:113px;top:581px;width:15px;height:16px;background:#f0f0ea;border-radius:2px"></div>
<svg style="position:absolute;left:116px;top:586px" width="9" height="6"><path d="M1 1 L4.5 4.5 L8 1" stroke="#c9c7ba" stroke-width="2" fill="none"/></svg>
<div class="t" style="left:148px;top:583px;font-size:12px;line-height:12px;">量程</div>
<svg style="position:absolute;left:180px;top:585px" width="9" height="8"><path d="M0.5 0.5 L8.5 7.5 M8.5 0.5 L0.5 7.5" stroke="#000" stroke-width="1"/></svg>
<div style="left:199px;top:579px;width:45px;height:20px;border:1px solid #c9c7ba;background:#ebebe4"></div>
<div style="left:227px;top:581px;width:15px;height:16px;background:#f0f0ea;border-radius:2px"></div>
<svg style="position:absolute;left:230px;top:586px" width="9" height="6"><path d="M1 1 L4.5 4.5 L8 1" stroke="#c9c7ba" stroke-width="2" fill="none"/></svg>
<div class="t" style="left:249px;top:583px;font-size:12px;line-height:12px;">次方</div>
<div class="t" style="left:319px;top:583px;font-size:12px;line-height:12px;">未安装</div>
<div class="t m" style="left:373px;top:579px;width:47px;height:21px;border:1px solid #7f9db9;color:#000;font-size:11px;line-height:17px;text-align:center">-</div>
<div class="t m" style="left:473px;top:579px;width:47px;height:21px;border:1px solid #7f9db9;color:#000;font-size:11px;line-height:17px;text-align:center">-</div>
<div class="t m" style="left:574px;top:579px;width:47px;height:21px;border:1px solid #7f9db9;color:#000;font-size:11px;line-height:17px;text-align:center">-</div>
<div style="left:85px;top:609px;width:45px;height:20px;border:1px solid #c9c7ba;background:#ebebe4"></div>
<div style="left:113px;top:611px;width:15px;height:16px;background:#f0f0ea;border-radius:2px"></div>
<svg style="position:absolute;left:116px;top:616px" width="9" height="6"><path d="M1 1 L4.5 4.5 L8 1" stroke="#c9c7ba" stroke-width="2" fill="none"/></svg>
<div class="t" style="left:148px;top:613px;font-size:12px;line-height:12px;">量程</div>
<svg style="position:absolute;left:180px;top:615px" width="9" height="8"><path d="M0.5 0.5 L8.5 7.5 M8.5 0.5 L0.5 7.5" stroke="#000" stroke-width="1"/></svg>
<div style="left:199px;top:609px;width:45px;height:20px;border:1px solid #c9c7ba;background:#ebebe4"></div>
<div style="left:227px;top:611px;width:15px;height:16px;background:#f0f0ea;border-radius:2px"></div>
<svg style="position:absolute;left:230px;top:616px" width="9" height="6"><path d="M1 1 L4.5 4.5 L8 1" stroke="#c9c7ba" stroke-width="2" fill="none"/></svg>
<div class="t" style="left:249px;top:613px;font-size:12px;line-height:12px;">次方</div>
<div class="t" style="left:319px;top:613px;font-size:12px;line-height:12px;">未安装</div>
<div class="t m" style="left:373px;top:609px;width:47px;height:21px;border:1px solid #7f9db9;color:#000;font-size:11px;line-height:17px;text-align:center">-</div>
<div class="t m" style="left:473px;top:609px;width:47px;height:21px;border:1px solid #7f9db9;color:#000;font-size:11px;line-height:17px;text-align:center">-</div>
<div class="t m" style="left:574px;top:609px;width:47px;height:21px;border:1px solid #7f9db9;color:#000;font-size:11px;line-height:17px;text-align:center">-</div>
<div class="t" style="left:674px;top:588px;width:70px;height:33px;border:1px solid #c9c7ba;border-radius:3px;background:#f5f4ea;color:#aca899;text-align:center;line-height:31px;font-size:11px">FID点火</div>
<div style="left:85px;top:641px;width:45px;height:20px;border:1px solid #c9c7ba;background:#ebebe4"></div>
<div style="left:113px;top:643px;width:15px;height:16px;background:#f0f0ea;border-radius:2px"></div>
<svg style="position:absolute;left:116px;top:648px" width="9" height="6"><path d="M1 1 L4.5 4.5 L8 1" stroke="#c9c7ba" stroke-width="2" fill="none"/></svg>
<div class="t" style="left:148px;top:645px;font-size:12px;line-height:12px;">桥流<span class="m" style="font-size:11px;letter-spacing:-0.5px">(mA)</span></div>
<div class="t m" style="left:205px;top:641px;width:45px;height:20px;border:1px solid #7f9db9;color:#aca899;font-size:11px;line-height:16px;text-align:center">0</div>
<div class="t" style="left:256px;top:641px;width:30px;height:20px;border:1px solid #c9c7ba;border-radius:3px;background:#f5f4ea;color:#aca899;text-align:center;line-height:18px;font-size:12px">设置</div>
<div class="t" style="left:319px;top:645px;font-size:12px;line-height:12px;">未安装</div>
<div class="t m" style="left:373px;top:641px;width:47px;height:21px;border:1px solid #7f9db9;color:#000;font-size:11px;line-height:17px;text-align:center">-</div>
<div style="left:85px;top:672px;width:45px;height:20px;border:1px solid #c9c7ba;background:#ebebe4"></div>
<div style="left:113px;top:674px;width:15px;height:16px;background:#f0f0ea;border-radius:2px"></div>
<svg style="position:absolute;left:116px;top:679px" width="9" height="6"><path d="M1 1 L4.5 4.5 L8 1" stroke="#c9c7ba" stroke-width="2" fill="none"/></svg>
<div class="t" style="left:148px;top:676px;font-size:12px;line-height:12px;">桥流<span class="m" style="font-size:11px;letter-spacing:-0.5px">(mA)</span></div>
<div class="t m" style="left:205px;top:672px;width:45px;height:20px;border:1px solid #7f9db9;color:#aca899;font-size:11px;line-height:16px;text-align:center">0</div>
<div class="t" style="left:256px;top:672px;width:30px;height:20px;border:1px solid #c9c7ba;border-radius:3px;background:#f5f4ea;color:#aca899;text-align:center;line-height:18px;font-size:12px">设置</div>
<div class="t" style="left:319px;top:676px;font-size:12px;line-height:12px;">未安装</div>
<div class="t m" style="left:373px;top:672px;width:47px;height:21px;border:1px solid #7f9db9;color:#000;font-size:11px;line-height:17px;text-align:center">-</div>
<div class="t" style="left:674px;top:639px;width:70px;height:24px;border:1px solid #c9c7ba;border-radius:3px;background:#f5f4ea;color:#aca899;text-align:center;line-height:22px;font-size:11px">TCD1通桥流</div>
<div class="t" style="left:674px;top:670px;width:70px;height:23px;border:1px solid #c9c7ba;border-radius:3px;background:#f5f4ea;color:#aca899;text-align:center;line-height:21px;font-size:11px">TCD2通桥流</div>
<div style="left:757px;top:49px;width:256px;height:1px;background:#fff"></div>
<div style="left:757px;top:49px;width:1px;height:654px;background:#fff"></div>
<div style="left:759px;top:51px;width:252px;height:1px;background:#000"></div>
<div style="left:759px;top:51px;width:1px;height:651px;background:#000"></div>
<div style="left:1012px;top:49px;width:1px;height:654px;background:#fff"></div>
<div style="left:770px;top:65px;width:236px;height:47px;border:1px solid #fff"></div>
<div style="left:769px;top:64px;width:236px;height:47px;border:1px solid #aca899"></div>
<div style="left:777px;top:75px;width:16px;height:9px;background:#2b2b2b;border-radius:1px;box-shadow:inset 0 0 0 1px #1a1a1a"></div>
<div style="left:781px;top:79px;width:8px;height:1px;background:#4a4a4a"></div>
<div class="t" style="left:773px;top:88px;width:24px;text-align:center;font-size:12px;line-height:12px">准备</div>
<div style="left:816px;top:75px;width:16px;height:9px;background:#2b2b2b;border-radius:1px;box-shadow:inset 0 0 0 1px #1a1a1a"></div>
<div style="left:820px;top:79px;width:8px;height:1px;background:#4a4a4a"></div>
<div class="t" style="left:812px;top:88px;width:24px;text-align:center;font-size:12px;line-height:12px">初始</div>
<div style="left:855px;top:75px;width:16px;height:9px;background:#2b2b2b;border-radius:1px;box-shadow:inset 0 0 0 1px #1a1a1a"></div>
<div style="left:859px;top:79px;width:8px;height:1px;background:#4a4a4a"></div>
<div class="t" style="left:851px;top:88px;width:24px;text-align:center;font-size:12px;line-height:12px">升温</div>
<div style="left:894px;top:75px;width:16px;height:9px;background:#2b2b2b;border-radius:1px;box-shadow:inset 0 0 0 1px #1a1a1a"></div>
<div style="left:898px;top:79px;width:8px;height:1px;background:#4a4a4a"></div>
<div class="t" style="left:890px;top:88px;width:24px;text-align:center;font-size:12px;line-height:12px">保持</div>
<div style="left:933px;top:75px;width:16px;height:9px;background:#2b2b2b;border-radius:1px;box-shadow:inset 0 0 0 1px #1a1a1a"></div>
<div style="left:937px;top:79px;width:8px;height:1px;background:#4a4a4a"></div>
<div class="t" style="left:929px;top:88px;width:24px;text-align:center;font-size:12px;line-height:12px">降温</div>
<div style="left:972px;top:75px;width:16px;height:9px;background:#2b2b2b;border-radius:1px;box-shadow:inset 0 0 0 1px #1a1a1a"></div>
<div style="left:976px;top:79px;width:8px;height:1px;background:#4a4a4a"></div>
<div class="t" style="left:968px;top:88px;width:24px;text-align:center;font-size:12px;line-height:12px">工作</div>
<div style="left:764px;top:127px;width:245px;height:236px;border:1px solid #d0d0bf;border-radius:4px"></div>
<div class="t" style="left:770px;top:121px;width:51px;height:12px;background:#ece9d8;color:#0046d5;font-size:12px;line-height:12px;padding-left:2px">控温<span class="m" style="font-size:11px">(</span>℃<span class="m" style="font-size:11px">)</span></div>
<div class="t" style="left:770px;top:136px;width:91px;height:22px;border:1px solid #003c74;border-radius:3px;background:linear-gradient(#fff 0%,#f4f3ee 40%,#ecebe5 75%,#d8d2c6 100%);text-align:center;line-height:20px;font-size:12px;">启动控温</div>
<div class="t" style="left:877px;top:136px;width:55px;height:22px;border:1px solid #c9c7ba;border-radius:3px;background:#f5f4ea;color:#aca899;text-align:center;line-height:20px;font-size:12px">结束运行</div>
<div class="t" style="left:946px;top:136px;width:56px;height:22px;border:1px solid #c9c7ba;border-radius:3px;background:#f5f4ea;color:#aca899;text-align:center;line-height:20px;font-size:12px">关闭控温</div>
<div style="left:769px;top:163px;width:234px;height:1px;background:#aca899"></div>
<div style="left:770px;top:164px;width:233px;height:1px;background:#fff"></div>
<div style="left:769px;top:190px;width:234px;height:1px;background:#aca899"></div>
<div style="left:770px;top:191px;width:233px;height:1px;background:#fff"></div>
<div style="left:769px;top:352px;width:234px;height:1px;background:#aca899"></div>
<div style="left:770px;top:353px;width:233px;height:1px;background:#fff"></div>
<div style="left:769px;top:217px;width:49px;height:1px;background:#aca899"></div>
<div style="left:770px;top:218px;width:48px;height:1px;background:#fff"></div>
<div style="left:769px;top:244px;width:49px;height:1px;background:#aca899"></div>
<div style="left:770px;top:245px;width:48px;height:1px;background:#fff"></div>
<div style="left:769px;top:271px;width:49px;height:1px;background:#aca899"></div>
<div style="left:770px;top:272px;width:48px;height:1px;background:#fff"></div>
<div style="left:769px;top:298px;width:49px;height:1px;background:#aca899"></div>
<div style="left:770px;top:299px;width:48px;height:1px;background:#fff"></div>
<div style="left:769px;top:325px;width:49px;height:1px;background:#aca899"></div>
<div style="left:770px;top:326px;width:48px;height:1px;background:#fff"></div>
<div style="left:769px;top:163px;width:1px;height:191px;background:#aca899"></div>
<div style="left:770px;top:164px;width:1px;height:190px;background:#fff"></div>
<div style="left:816px;top:163px;width:1px;height:191px;background:#aca899"></div>
<div style="left:817px;top:164px;width:1px;height:190px;background:#fff"></div>
<div style="left:864px;top:163px;width:1px;height:29px;background:#aca899"></div>
<div style="left:865px;top:164px;width:1px;height:28px;background:#fff"></div>
<div style="left:910px;top:163px;width:1px;height:29px;background:#aca899"></div>
<div style="left:911px;top:164px;width:1px;height:28px;background:#fff"></div>
<div style="left:955px;top:163px;width:1px;height:191px;background:#aca899"></div>
<div style="left:956px;top:164px;width:1px;height:190px;background:#fff"></div>
<div style="left:1001px;top:163px;width:1px;height:191px;background:#aca899"></div>
<div style="left:1002px;top:164px;width:1px;height:190px;background:#fff"></div>
<div class="t m" style="left:771px;top:168px;width:43px;height:20px;border:1px solid #7f9db9;background:#fff;font-size:12px;line-height:18px;padding-left:3px;letter-spacing:-0.5px">0#</div>
<div style="left:797px;top:170px;width:15px;height:16px;border-radius:2px;background:linear-gradient(135deg,#dbe6fd,#b9cbf6)"></div>
<svg style="position:absolute;left:800px;top:175px" width="9" height="7"><path d="M1 1.5 L4.5 5 L8 1.5" stroke="#4d6185" stroke-width="2" fill="none"/></svg>
<div class="t" style="left:818px;top:173px;width:44px;text-align:center;font-size:12px;line-height:12px">实测值</div>
<div class="t" style="left:865px;top:173px;width:44px;text-align:center;font-size:12px;line-height:12px">设定值</div>
<div class="t" style="left:910px;top:173px;width:44px;text-align:center;font-size:12px;line-height:12px">保护值</div>
<div class="t" style="left:775px;top:199px;font-size:12px;line-height:12px">进样器</div>
<div class="t m" style="left:822px;top:196px;width:39px;height:20px;background:#000;border:1px solid #7f9db9;color:#00ffff;font-size:12px;line-height:18px;text-align:center;letter-spacing:-0.8px">129.6</div>
<div class="t m" style="left:867px;top:196px;width:39px;height:20px;border:1px solid #7f9db9;background:#fff;color:#000;font-size:12px;line-height:18px;text-align:center">129</div>
<div class="t m" style="left:912px;top:196px;width:39px;height:20px;border:1px solid #7f9db9;background:#fff;color:#000;font-size:12px;line-height:18px;text-align:center">350</div>
<div class="t" style="left:962px;top:197px;width:33px;height:19px;border:1px solid #003c74;border-radius:3px;background:linear-gradient(#fff 0%,#f4f3ee 40%,#ecebe5 75%,#d8d2c6 100%);text-align:center;line-height:17px;font-size:12px;">设置</div>
<div class="t" style="left:775px;top:226px;font-size:12px;line-height:12px">柱&nbsp;&nbsp;&nbsp;&nbsp;炉</div>
<div class="t m" style="left:822px;top:223px;width:39px;height:20px;background:#000;border:1px solid #7f9db9;color:#00ffff;font-size:12px;line-height:18px;text-align:center;letter-spacing:-0.8px">129.4</div>
<div class="t m" style="left:867px;top:223px;width:39px;height:20px;border:1px solid #7f9db9;background:#fff;color:#000;font-size:12px;line-height:18px;text-align:center">130</div>
<div class="t m" style="left:912px;top:223px;width:39px;height:20px;border:1px solid #7f9db9;background:#fff;color:#000;font-size:12px;line-height:18px;text-align:center">350</div>
<div class="t" style="left:962px;top:224px;width:33px;height:19px;border:1px solid #003c74;border-radius:3px;background:linear-gradient(#fff 0%,#f4f3ee 40%,#ecebe5 75%,#d8d2c6 100%);text-align:center;line-height:17px;font-size:12px;">设置</div>
<div class="t" style="left:775px;top:253px;font-size:12px;line-height:12px">检测器</div>
<div class="t m" style="left:822px;top:250px;width:39px;height:20px;background:#000;border:1px solid #7f9db9;color:#00ffff;font-size:12px;line-height:18px;text-align:center;letter-spacing:-0.8px">128.8</div>
<div class="t m" style="left:867px;top:250px;width:39px;height:20px;border:1px solid #7f9db9;background:#fff;color:#000;font-size:12px;line-height:18px;text-align:center">129</div>
<div class="t m" style="left:912px;top:250px;width:39px;height:20px;border:1px solid #7f9db9;background:#fff;color:#000;font-size:12px;line-height:18px;text-align:center">350</div>
<div class="t" style="left:962px;top:251px;width:33px;height:19px;border:1px solid #003c74;border-radius:3px;background:linear-gradient(#fff 0%,#f4f3ee 40%,#ecebe5 75%,#d8d2c6 100%);text-align:center;line-height:17px;font-size:12px;">设置</div>
<div class="t" style="left:775px;top:280px;font-size:12px;line-height:12px">热导池</div>
<div class="t m" style="left:822px;top:277px;width:39px;height:20px;background:#000;border:1px solid #7f9db9;color:#00ffff;font-size:12px;line-height:18px;text-align:center;letter-spacing:-0.8px">130.6</div>
<div class="t m" style="left:867px;top:277px;width:39px;height:20px;border:1px solid #7f9db9;background:#fff;color:#000;font-size:12px;line-height:18px;text-align:center">130</div>
<div class="t m" style="left:912px;top:277px;width:39px;height:20px;border:1px solid #7f9db9;background:#fff;color:#000;font-size:12px;line-height:18px;text-align:center">250</div>
<div class="t" style="left:962px;top:278px;width:33px;height:19px;border:1px solid #003c74;border-radius:3px;background:linear-gradient(#fff 0%,#f4f3ee 40%,#ecebe5 75%,#d8d2c6 100%);text-align:center;line-height:17px;font-size:12px;">设置</div>
<div class="t" style="left:775px;top:307px;font-size:12px;line-height:12px">辅助&nbsp;<span class="m">1</span></div>
<div class="t m" style="left:822px;top:304px;width:39px;height:20px;background:#000;border:1px solid #7f9db9;color:#00ffff;font-size:12px;line-height:18px;text-align:center;letter-spacing:-0.8px">129.1</div>
<div class="t m" style="left:867px;top:304px;width:39px;height:20px;border:1px solid #7f9db9;background:#fff;color:#000;font-size:12px;line-height:18px;text-align:center">130</div>
<div class="t m" style="left:912px;top:304px;width:39px;height:20px;border:1px solid #7f9db9;background:#fff;color:#000;font-size:12px;line-height:18px;text-align:center">350</div>
<div class="t" style="left:962px;top:305px;width:33px;height:19px;border:1px solid #003c74;border-radius:3px;background:linear-gradient(#fff 0%,#f4f3ee 40%,#ecebe5 75%,#d8d2c6 100%);text-align:center;line-height:17px;font-size:12px;">设置</div>
<div class="t" style="left:775px;top:334px;font-size:12px;line-height:12px">辅助&nbsp;<span class="m">2</span></div>
<div class="t m" style="left:822px;top:331px;width:39px;height:20px;background:#000;border:1px solid #7f9db9;color:#00ffff;font-size:12px;line-height:18px;text-align:center;letter-spacing:-0.8px">129.2</div>
<div class="t m" style="left:867px;top:331px;width:39px;height:20px;border:1px solid #7f9db9;background:#fff;color:#000;font-size:12px;line-height:18px;text-align:center">120</div>
<div class="t m" style="left:912px;top:331px;width:39px;height:20px;border:1px solid #7f9db9;background:#fff;color:#000;font-size:12px;line-height:18px;text-align:center">350</div>
<div class="t" style="left:962px;top:332px;width:33px;height:19px;border:1px solid #003c74;border-radius:3px;background:linear-gradient(#fff 0%,#f4f3ee 40%,#ecebe5 75%,#d8d2c6 100%);text-align:center;line-height:17px;font-size:12px;">设置</div>
<div style="left:764px;top:376px;width:245px;height:179px;border:1px solid #d0d0bf;border-radius:4px"></div>
<div class="t" style="left:770px;top:370px;width:81px;height:12px;background:#ece9d8;color:#0046d5;font-size:12px;line-height:12px;padding-left:2px">事件设置<span class="m" style="font-size:11px;letter-spacing:-0.5px">(min)</span></div>
<div class="t" style="left:775px;top:385px;font-size:12px;line-height:12px">阶号</div>
<div class="t" style="left:814px;top:385px;font-size:12px;line-height:12px">事件<span class="m" style="font-size:11px">1</span></div>
<div class="t" style="left:862px;top:385px;font-size:12px;line-height:12px">事件<span class="m" style="font-size:11px">2</span></div>
<div class="t m" style="left:769px;top:397px;width:35px;height:20px;border:1px solid #7f9db9;background:#fff;font-size:12px;line-height:18px;padding-left:3px;letter-spacing:-0.5px"></div>
<div style="left:787px;top:399px;width:15px;height:16px;border-radius:2px;background:linear-gradient(135deg,#dbe6fd,#b9cbf6)"></div>
<svg style="position:absolute;left:790px;top:404px" width="9" height="7"><path d="M1 1.5 L4.5 5 L8 1.5" stroke="#4d6185" stroke-width="2" fill="none"/></svg>
<div class="t m" style="left:805px;top:397px;width:44px;height:20px;border:1px solid #7f9db9;background:#fff;color:#000;font-size:12px;line-height:18px;text-align:center"></div>
<div class="t m" style="left:850px;top:397px;width:44px;height:20px;border:1px solid #7f9db9;background:#fff;color:#000;font-size:12px;line-height:18px;text-align:center"></div>
<div class="t" style="left:896px;top:398px;width:30px;height:18px;border:1px solid #003c74;border-radius:3px;background:linear-gradient(#fff 0%,#f4f3ee 40%,#ecebe5 75%,#d8d2c6 100%);text-align:center;line-height:16px;font-size:12px;">加入</div>
<div style="left:928px;top:387px;width:78px;height:39px;border:1px solid #d0d0bf;border-radius:4px"></div>
<div class="t" style="left:935px;top:381px;width:51px;height:12px;background:#ece9d8;color:#0046d5;font-size:12px;line-height:12px;padding-left:2px">循环时间</div>
<div class="t m" style="left:933px;top:397px;width:38px;height:21px;border:1px solid #7f9db9;background:#fff;color:#000;font-size:12px;line-height:19px;text-align:center">0.0</div>
<div class="t" style="left:974px;top:398px;width:28px;height:19px;border:1px solid #003c74;border-radius:3px;background:linear-gradient(#fff 0%,#f4f3ee 40%,#ecebe5 75%,#d8d2c6 100%);text-align:center;line-height:17px;font-size:12px;">设置</div>
<div style="left:769px;top:420px;width:157px;height:132px;border:1px solid #7f9db9;background:#fff"></div>
<div style="left:770px;top:421px;width:155px;height:22px;background:linear-gradient(#f1efe2,#ebeadb 75%,#dedbc9 85%,#d0cdb8)"></div>
<div style="left:804px;top:425px;width:1px;height:13px;background:#c9c6b3"></div>
<div style="left:805px;top:425px;width:1px;height:13px;background:#fff"></div>
<div style="left:850px;top:425px;width:1px;height:13px;background:#c9c6b3"></div>
<div style="left:851px;top:425px;width:1px;height:13px;background:#fff"></div>
<div style="left:896px;top:425px;width:1px;height:13px;background:#c9c6b3"></div>
<div style="left:897px;top:425px;width:1px;height:13px;background:#fff"></div>
<div class="t m" style="left:820px;top:427px;font-size:11px;line-height:12px;font-weight:bold;letter-spacing:-0.3px">min</div>
<div class="t m" style="left:866px;top:427px;font-size:11px;line-height:12px;font-weight:bold;letter-spacing:-0.3px">min</div>
<div style="left:806px;top:443px;width:1px;height:108px;background:#f0efe2"></div>
<div style="left:852px;top:443px;width:1px;height:108px;background:#f0efe2"></div>
<div style="left:898px;top:443px;width:1px;height:108px;background:#f0efe2"></div>
<div style="left:770px;top:454px;width:155px;height:1px;background:#f0efe2"></div>
<div class="t m" style="left:777px;top:443px;font-size:12px;line-height:12px;letter-spacing:-1px">1</div>
<div class="t m" style="left:816px;top:443px;font-size:12px;line-height:12px;letter-spacing:-1px">0.50</div>
<div class="t m" style="left:862px;top:443px;font-size:12px;line-height:12px;letter-spacing:-1px">0.00</div>
<div style="left:770px;top:467px;width:155px;height:1px;background:#f0efe2"></div>
<div class="t m" style="left:777px;top:456px;font-size:12px;line-height:12px;letter-spacing:-1px">2</div>
<div class="t m" style="left:816px;top:456px;font-size:12px;line-height:12px;letter-spacing:-1px">1.00</div>
<div class="t m" style="left:862px;top:456px;font-size:12px;line-height:12px;letter-spacing:-1px">0.00</div>
<div style="left:770px;top:480px;width:155px;height:1px;background:#f0efe2"></div>
<div class="t m" style="left:777px;top:469px;font-size:12px;line-height:12px;letter-spacing:-1px">3</div>
<div class="t m" style="left:816px;top:469px;font-size:12px;line-height:12px;letter-spacing:-1px">0.00</div>
<div class="t m" style="left:862px;top:469px;font-size:12px;line-height:12px;letter-spacing:-1px">0.00</div>
<div style="left:770px;top:493px;width:155px;height:1px;background:#f0efe2"></div>
<div class="t m" style="left:777px;top:482px;font-size:12px;line-height:12px;letter-spacing:-1px">4</div>
<div class="t m" style="left:816px;top:482px;font-size:12px;line-height:12px;letter-spacing:-1px">0.00</div>
<div class="t m" style="left:862px;top:482px;font-size:12px;line-height:12px;letter-spacing:-1px">0.00</div>
<div style="left:770px;top:506px;width:155px;height:1px;background:#f0efe2"></div>
<div class="t m" style="left:777px;top:495px;font-size:12px;line-height:12px;letter-spacing:-1px">5</div>
<div class="t m" style="left:816px;top:495px;font-size:12px;line-height:12px;letter-spacing:-1px">0.00</div>
<div class="t m" style="left:862px;top:495px;font-size:12px;line-height:12px;letter-spacing:-1px">0.00</div>
<div style="left:770px;top:519px;width:155px;height:1px;background:#f0efe2"></div>
<div class="t m" style="left:777px;top:508px;font-size:12px;line-height:12px;letter-spacing:-1px">6</div>
<div class="t m" style="left:816px;top:508px;font-size:12px;line-height:12px;letter-spacing:-1px">0.00</div>
<div class="t m" style="left:862px;top:508px;font-size:12px;line-height:12px;letter-spacing:-1px">0.00</div>
<div style="left:770px;top:532px;width:155px;height:1px;background:#f0efe2"></div>
<div class="t m" style="left:777px;top:521px;font-size:12px;line-height:12px;letter-spacing:-1px">7</div>
<div class="t m" style="left:816px;top:521px;font-size:12px;line-height:12px;letter-spacing:-1px">0.00</div>
<div class="t m" style="left:862px;top:521px;font-size:12px;line-height:12px;letter-spacing:-1px">0.00</div>
<div style="left:770px;top:545px;width:155px;height:1px;background:#f0efe2"></div>
<div class="t m" style="left:777px;top:534px;font-size:12px;line-height:12px;letter-spacing:-1px">8</div>
<div class="t m" style="left:816px;top:534px;font-size:12px;line-height:12px;letter-spacing:-1px">0.00</div>
<div class="t m" style="left:862px;top:534px;font-size:12px;line-height:12px;letter-spacing:-1px">0.00</div>
<div style="left:928px;top:438px;width:78px;height:38px;border:1px solid #d0d0bf;border-radius:4px"></div>
<div class="t" style="left:935px;top:432px;width:35px;height:12px;background:#ece9d8;color:#0046d5;font-size:12px;line-height:12px;padding-left:2px">事件<span class="m" style="font-size:11px">1</span></div>
<div class="t" style="left:935px;top:454px;font-size:12px;line-height:12px">停止,</div>
<div class="t" style="left:974px;top:450px;width:28px;height:19px;border:1px solid #003c74;border-radius:3px;background:linear-gradient(#fff 0%,#f4f3ee 40%,#ecebe5 75%,#d8d2c6 100%);text-align:center;line-height:17px;font-size:12px;">关</div>
<div style="left:928px;top:488px;width:78px;height:38px;border:1px solid #d0d0bf;border-radius:4px"></div>
<div class="t" style="left:935px;top:482px;width:35px;height:12px;background:#ece9d8;color:#0046d5;font-size:12px;line-height:12px;padding-left:2px">事件<span class="m" style="font-size:11px">2</span></div>
<div class="t" style="left:935px;top:504px;font-size:12px;line-height:12px">停止,</div>
<div class="t" style="left:974px;top:500px;width:28px;height:19px;border:1px solid #003c74;border-radius:3px;background:linear-gradient(#fff 0%,#f4f3ee 40%,#ecebe5 75%,#d8d2c6 100%);text-align:center;line-height:17px;font-size:12px;">关</div>
<div class="t" style="left:937px;top:533px;width:28px;height:18px;border:1px solid #003c74;border-radius:3px;background:linear-gradient(#fff 0%,#f4f3ee 40%,#ecebe5 75%,#d8d2c6 100%);text-align:center;line-height:16px;font-size:12px;">修改</div>
<div class="t" style="left:973px;top:533px;width:28px;height:18px;border:1px solid #003c74;border-radius:3px;background:linear-gradient(#fff 0%,#f4f3ee 40%,#ecebe5 75%,#d8d2c6 100%);text-align:center;line-height:16px;font-size:12px;">删除</div>
<div style="left:4px;top:703px;width:1009px;height:1px;background:#fff"></div>
<div style="left:4px;top:704px;width:1009px;height:19px;background:linear-gradient(#dcd9c8,#ece9d8 3px,#ece9d8 15px,#e2dfce)"></div>
<div class="t" style="left:6px;top:707px;font-size:12px;line-height:12px">就绪</div>
<div style="left:935px;top:706px;width:1px;height:15px;background:#c9c6b5"></div>
<div style="left:936px;top:706px;width:1px;height:15px;background:#fff"></div>
<div style="left:961px;top:706px;width:1px;height:15px;background:#c9c6b5"></div>
<div style="left:962px;top:706px;width:1px;height:15px;background:#fff"></div>
<div style="left:993px;top:706px;width:1px;height:15px;background:#c9c6b5"></div>
<div style="left:994px;top:706px;width:1px;height:15px;background:#fff"></div>
<div class="t m" style="left:940px;top:708px;font-size:11px;line-height:12px;letter-spacing:-1.5px;font-weight:bold">NUM</div>
<div style="left:1009px;top:711px;width:2px;height:2px;background:#c0bca8"></div>
<div style="left:1006px;top:714px;width:2px;height:2px;background:#c0bca8"></div>
<div style="left:1009px;top:714px;width:2px;height:2px;background:#c0bca8"></div>
<div style="left:1003px;top:717px;width:2px;height:2px;background:#c0bca8"></div>
<div style="left:1006px;top:717px;width:2px;height:2px;background:#c0bca8"></div>
<div style="left:1009px;top:717px;width:2px;height:2px;background:#c0bca8"></div></body></html>
